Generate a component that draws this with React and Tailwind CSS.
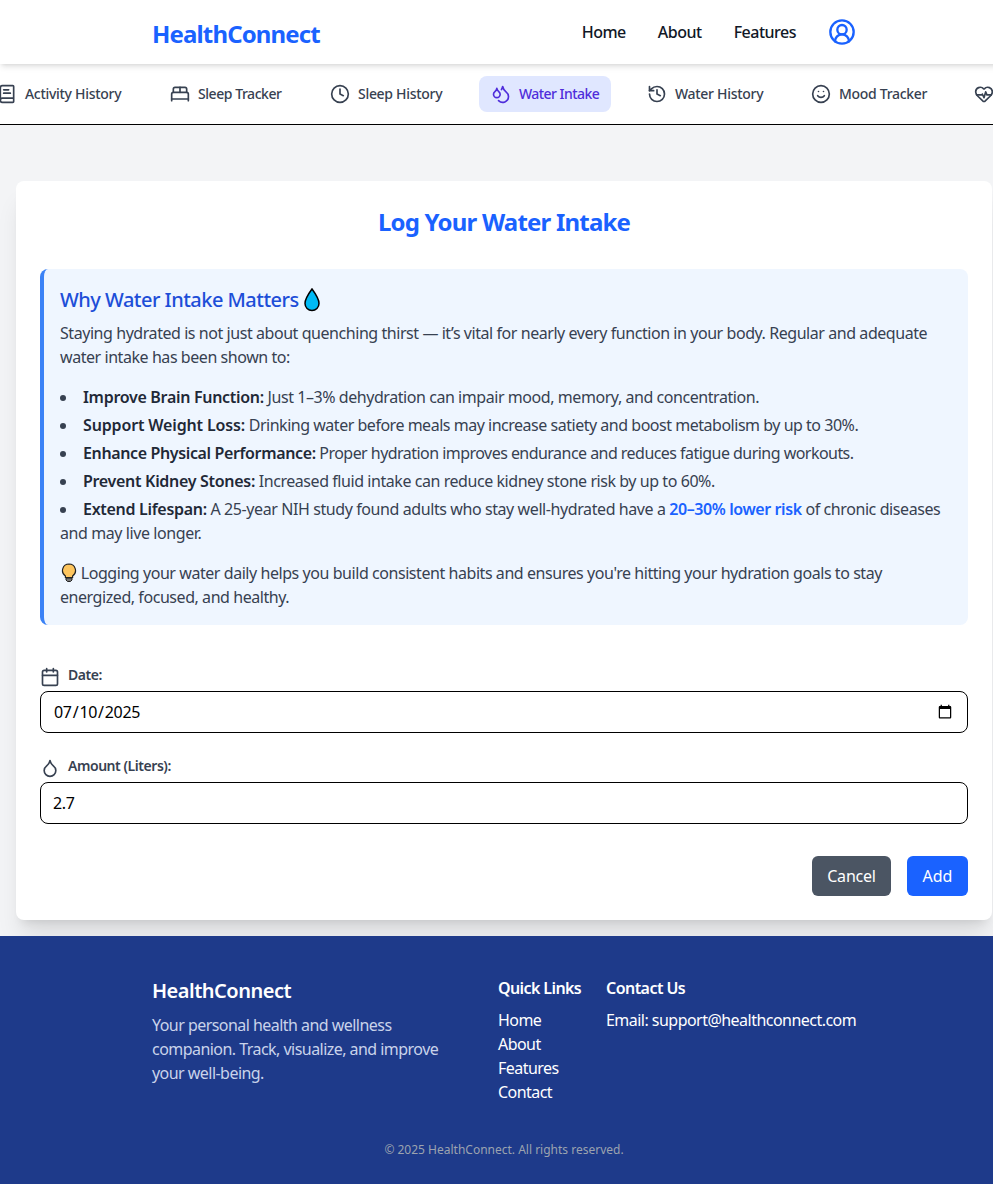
import React from 'react';
import { BookText, BedDouble, Clock, Droplets, History, Smile, HeartPulse, CircleUserRound, Calendar, Droplet } from 'lucide-react';

const tabs = [
  { label: 'Activity History', Icon: BookText, width: 'w-[149px] tracking-[-0.3px]' },
  { label: 'Sleep Tracker', Icon: BedDouble, width: 'w-[136px] tracking-[-0.45px]' },
  { label: 'Sleep History', Icon: Clock, width: 'w-[137px] tracking-[-0.3px]' },
  { label: 'Water Intake', Icon: Droplets, width: 'w-[132px] tracking-[-0.55px]', active: true },
  { label: 'Water History', Icon: History, width: 'w-[140px] tracking-[-0.3px]' },
  { label: 'Mood Tracker', Icon: Smile, width: 'w-[139px] tracking-[-0.3px]' },
  { label: 'Health Tips', Icon: HeartPulse, width: 'w-[130px] tracking-[-0.3px]' },
];

function WaterDrop() {
  return (
    <svg width="18" height="24" viewBox="0 0 18 24" className="inline-block align-[-5px]">
      <path d="M9 1 C9 1 2 10.5 2 15.5 a7 7 0 0 0 14 0 C16 10.5 9 1 9 1 Z" fill="#00baf5" stroke="#000" strokeWidth="1.5" />
    </svg>
  );
}

function Bulb() {
  return (
    <svg width="16" height="20" viewBox="0 0 16 20" className="ml-px inline-block align-[-4px]">
      <path d="M8 1 a6.5 6.5 0 0 0-3.6 11.9 V14.5 h7.2 V12.9 A6.5 6.5 0 0 0 8 1 Z" fill="#fdc55e" stroke="#222" strokeWidth="1.2" />
      <path d="M5 15 h6 v2 l-1.5 1.5 h-3 L5 17 Z" fill="#777" stroke="#222" strokeWidth="1" />
    </svg>
  );
}

const strong = 'font-semibold tracking-[-0.3px] text-[#1f2937]';

export default function App() {
  return (
    <div className="w-[993px] overflow-hidden bg-white font-['Noto_Sans','Open_Sans',sans-serif]">
      <div className="w-[1008px]">
        <header className="relative z-10 h-16 bg-white shadow-md">
          <div className="mx-auto flex h-full max-w-3xl items-center justify-between px-8">
            <a className="pt-1 text-2xl font-bold tracking-[-0.85px] text-[#1a62ff]">HealthConnect</a>
            <nav className="flex items-center gap-8 text-base font-medium tracking-[-0.5px] text-[#111827]">
              <a>Home</a>
              <a>About</a>
              <a>Features</a>
              <CircleUserRound className="h-7 w-7 text-[#1a62ff]" strokeWidth={2} />
            </nav>
          </div>
        </header>

        <div className="h-[61px] overflow-hidden border-b border-black bg-white">
          <div className="ml-[-15px] flex w-[1100px] items-center gap-6 pt-3">
            {tabs.map(({ label, Icon, active, width }) => (
              <a
                key={label}
                className={`flex h-9 shrink-0 items-center gap-2 whitespace-nowrap rounded-lg px-3 text-sm font-medium ${width} ${
                  active ? 'bg-[#e0e7ff] text-[#4f2ddb]' : 'text-[#374151]'
                }`}
              >
                <Icon className="h-5 w-5 shrink-0" strokeWidth={2} />
                {label}
              </a>
            ))}
          </div>
        </div>

        <main className="bg-[#f3f4f6] px-4 pb-4 pt-14">
          <section className="rounded-lg bg-white p-6 shadow-xl">
            <h1 className="mb-[31px] mt-px text-center text-2xl font-bold tracking-[-0.8px] text-[#1a62ff]">Log Your Water Intake</h1>

            <div className="mb-[42px] rounded-lg border-l-4 border-[#3b82f6] bg-[#eff6ff] p-4 text-base tracking-[-0.44px] text-[#374151]">
              <h2 className="mb-[7px] mt-px text-xl font-medium tracking-[-0.52px] text-[#1d4ed8]">
                Why Water Intake Matters <WaterDrop />
              </h2>
              <p className="mb-4">
                Staying hydrated is not just about quenching thirst — it’s vital for nearly every function in your body. Regular and adequate water intake has been shown to:
              </p>
              <ul className="mb-4 list-inside list-disc space-y-1">
                <li><strong className={strong}>Improve Brain Function:</strong> Just 1–3% dehydration can impair mood, memory, and concentration.</li>
                <li className="tracking-[-0.48px]"><strong className="font-semibold tracking-[-0.15px] text-[#1f2937]">Support Weight Loss:</strong> Drinking water before meals may increase satiety and boost metabolism by up to 30%.</li>
                <li className="tracking-[-0.54px]"><strong className="font-semibold tracking-[-0.37px] text-[#1f2937]">Enhance Physical Performance:</strong> Proper hydration improves endurance and reduces fatigue during workouts.</li>
                <li><strong className={strong}>Prevent Kidney Stones:</strong> Increased fluid intake can reduce kidney stone risk by up to 60%.</li>
                <li className="tracking-[-0.41px]"><strong className={strong}>Extend Lifespan:</strong> A 25-year NIH study found adults who stay well-hydrated have a <span className="font-semibold text-[#1a62ff]">20–30% lower risk</span> of chronic diseases and may live longer.</li>
              </ul>
              <p>
                <Bulb /> Logging your water daily helps you build consistent habits and ensures you're hitting your hydration goals to stay energized, focused, and healthy.
              </p>
            </div>

            <form>
              <label className="mb-1 flex items-start gap-2 text-sm font-semibold leading-4 tracking-[-0.45px] text-[#374151]">
                <Calendar className="h-5 w-5 shrink-0" strokeWidth={2} /> Date:
              </label>
              <input type="date" defaultValue="2025-07-10" className="mb-[25px] block h-[42px] w-full rounded-lg border border-black px-3 text-base tracking-[-0.3px] text-black" />
              <label className="mb-1 flex items-start gap-2 text-sm font-semibold leading-4 tracking-[-0.45px] text-[#374151]">
                <Droplet className="h-5 w-5 shrink-0" strokeWidth={2} /> Amount (Liters):
              </label>
              <input type="number" defaultValue="2.7" className="block h-[42px] w-full rounded-lg border border-black px-3 text-base tracking-[-0.3px] text-black" />
              <div className="mt-8 flex justify-end gap-4">
                <button type="button" className="h-10 w-[79px] rounded-md bg-[#4b5563] text-base tracking-[-0.2px] text-white">Cancel</button>
                <button type="button" className="h-10 w-[61px] rounded-md bg-[#1a62ff] text-base text-white">Add</button>
              </div>
            </form>
          </section>
        </main>

        <footer className="h-[248px] bg-[#1e3a8a] pt-10 text-white">
          <div className="mx-auto flex max-w-3xl px-8">
            <div className="w-[346px] shrink-0">
              <h3 className="mb-2 mt-px text-xl font-semibold tracking-[-0.5px]">HealthConnect</h3>
              <p className="w-[300px] text-base tracking-[-0.54px] text-[#c9d3ea]">Your personal health and wellness companion. Track, visualize, and improve your well-being.</p>
            </div>
            <div className="w-[108px] shrink-0">
              <h4 className="mb-2 text-base font-semibold tracking-[-0.6px]">Quick Links</h4>
              <ul className="text-base tracking-[-0.55px]">
                <li>Home</li>
                <li>About</li>
                <li>Features</li>
                <li>Contact</li>
              </ul>
            </div>
            <div className="shrink-0">
              <h4 className="mb-2 text-base font-semibold tracking-[-0.55px]">Contact Us</h4>
              <p className="whitespace-nowrap text-base tracking-[-0.53px]">Email: support@healthconnect.com</p>
            </div>
          </div>
          <p className="mt-[38px] text-center text-xs text-[#9ca3af]">© 2025 HealthConnect. All rights reserved.</p>
        </footer>
      </div>
    </div>
  );
}
